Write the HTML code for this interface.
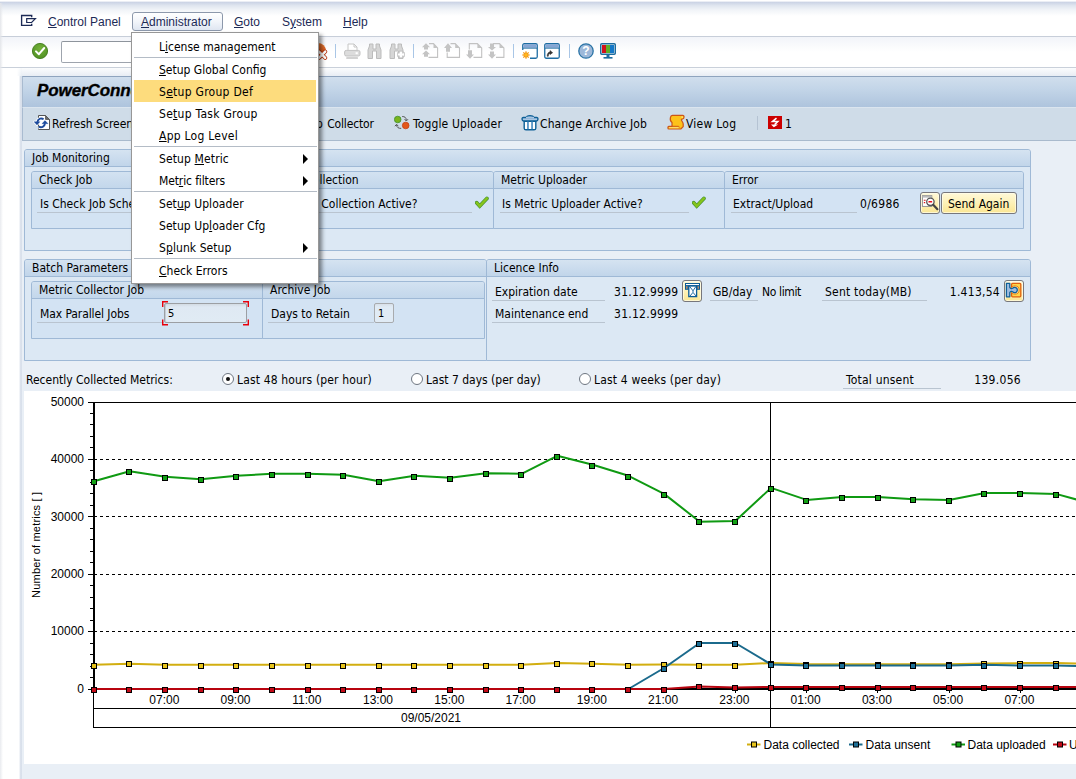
<!DOCTYPE html>
<html lang="en">
<head>
<meta charset="utf-8">
<title>PowerConnect Control Panel</title>
<style>
html,body{margin:0;padding:0;}
body{width:1076px;height:779px;overflow:hidden;position:relative;background:#e9eff6;
  font-family:"DejaVu Sans Condensed","Liberation Sans",sans-serif;font-size:12px;color:#000;}
.abs{position:absolute;}
.num{letter-spacing:0.27px;}
.t{position:absolute;white-space:nowrap;line-height:16px;height:16px;}
u{text-decoration:underline;text-underline-offset:1px;}
/* top chrome */
#menubar{left:0;top:0;width:1076px;height:36px;background:linear-gradient(#ffffff 0px,#ffffff 1.2px,#c9d2e4 2px,#dfe5ef 5.5px,#f1f4f8 10px,#ffffff 16px,#ffffff 36px);}
#menuline{left:0;top:36px;width:1076px;height:1px;background:#c7ced9;}
#toolbar{left:0;top:37px;width:1076px;height:30px;background:linear-gradient(#f2f4f9,#ffffff 50%,#ffffff);}
#toolline{left:0;top:67px;width:1076px;height:1px;background:#c9d0da;}
#gap{left:0;top:68px;width:1076px;height:8px;background:linear-gradient(#fbfcfd,#e8edf4);}
#leftstrip{left:0;top:68px;width:22px;height:711px;background:linear-gradient(90deg,#e9ebef 0px,#f4f5f7 1.5px,#ffffff 3px,#ffffff 19px,#e4e9f1 20px,#d3dbe8 21px,#dfe6ef 22px);}
#leftstrip2{left:0;top:68px;width:22px;height:8px;background:linear-gradient(90deg,#e9ebef 0px,#f4f5f7 1.5px,#ffffff 3px,#ffffff 17px,rgba(255,255,255,0) 22px);}
.menu{font-family:"Liberation Sans",sans-serif;font-size:12px;color:#1c2a56;top:14px;}
#adminbtn{left:132px;top:12px;width:89px;height:17px;border:1px solid #8c98ab;border-radius:3px;background:linear-gradient(#ffffff,#f2f5fa 50%,#dfe6f1);}
#cmd{left:61px;top:41px;width:200px;height:22px;border:1px solid #9ea4ad;border-top-color:#8e949c;border-radius:2px;background:#fff;box-sizing:border-box;}
.tsep{top:44px;width:1px;height:14px;background:#a9c6e6;}
/* title + app toolbar */
#title{left:22px;top:76px;width:1054px;height:31px;box-sizing:border-box;border-top:1px solid #8fa4be;border-left:1px solid #a9bbd0;background:linear-gradient(#d0deed,#c3d5e8 40%,#aec4dd);}
#titletxt{left:37px;top:80px;font-family:"Liberation Sans",sans-serif;font-weight:bold;font-style:italic;font-size:17px;line-height:22px;height:22px;color:#000;-webkit-text-stroke:0.35px #000;letter-spacing:-0.1px;}
#apptb{left:22px;top:107px;width:1054px;height:34px;box-sizing:border-box;border-left:1px solid #a9bbd0;border-bottom:1px solid #a9bacd;border-top:1px solid #dbe5ef;background:#cfdce8;}
/* groups */
.grp{position:absolute;box-sizing:border-box;border:1px solid #9fb9d6;border-radius:3px 3px 0 0;background:#dce8f4;}
.grp>.hd{position:absolute;left:0;top:0;right:0;height:16px;border-bottom:1px solid #9fb9d6;background:linear-gradient(#d5e3f1,#c1d5ea);border-radius:2px 2px 0 0;}
.sub{position:absolute;box-sizing:border-box;border:1px solid #9fb9d6;border-radius:3px 3px 0 0;background:#d3e3f3;}
.sub>.hd{position:absolute;left:0;top:0;right:0;height:16px;border-bottom:1px solid #9fb9d6;background:linear-gradient(#d3e2f1,#c3d7eb);border-radius:2px 2px 0 0;}
.lbl{position:absolute;white-space:nowrap;line-height:18px;height:18px;border-bottom:1px solid #b9c4d0;box-sizing:border-box;}
.btn{box-sizing:border-box;border:1px solid #77777c;border-radius:3px;background:linear-gradient(#fff9d9,#fdf0b3 55%,#fbe694);box-shadow:inset 0 0 0 1px rgba(255,253,235,0.7);}
.rad{width:12px;height:12px;box-sizing:border-box;border:1px solid #6e7681;border-radius:50%;background:#fff;}
.rad i{position:absolute;left:3px;top:3px;width:4px;height:4px;border-radius:50%;background:#111;}
/* dropdown */
#dd{left:131px;top:32px;width:186px;height:250px;background:#fff;border:1px solid #979797;box-sizing:content-box;box-shadow:3px 3px 4px rgba(0,0,0,0.45);}
#dd .it{position:absolute;left:27px;white-space:nowrap;line-height:16px;height:16px;color:#000;}
#dd .sep{position:absolute;left:2px;width:183px;height:1px;background:#b4bcc6;}
#dd .hl{position:absolute;left:2px;top:47px;width:182px;height:22px;background:#fddc7d;}
#dd .ar{position:absolute;left:171px;width:0;height:0;border-left:5px solid #000;border-top:5px solid transparent;border-bottom:5px solid transparent;}
</style>
</head>
<body>
<div class="abs" id="menubar"></div>
<div class="abs" id="menuline"></div>
<div class="abs" id="toolbar"></div>
<div class="abs" id="toolline"></div>
<div class="abs" id="gap"></div>
<div class="abs" id="leftstrip"></div>
<div class="abs" id="gap2" style="left:0;top:68px;width:22px;height:8px;background:linear-gradient(#f7f9fb,#e6ecf3)"></div>
<div class="abs" id="leftstrip2"></div>

<div class="abs" id="leftedge" style="left:0;top:3px;width:3px;height:65px;background:linear-gradient(90deg,#e4e6ea,rgba(255,255,255,0))"></div>
<!-- menu bar -->
<svg class="abs" style="left:20px;top:14px" width="18" height="13" viewBox="0 0 18 13"><path d="M11.7 3.2V1.5H1.6V11.3H11.7V9.8" fill="none" stroke="#1c2a56" stroke-width="1.35"/><path d="M6.7 4.7H15.4L11.6 8.5H6.7Z" fill="#fff" stroke="#1c2a56" stroke-width="1.2"/></svg>
<div class="t menu" style="left:48px"><u>C</u>ontrol Panel</div>
<div class="abs" id="adminbtn"></div>
<div class="t menu" style="left:141px"><u>A</u>dministrator</div>
<div class="t menu" style="left:234px"><u>G</u>oto</div>
<div class="t menu" style="left:282px">S<u>y</u>stem</div>
<div class="t menu" style="left:343px"><u>H</u>elp</div>

<!-- standard toolbar -->
<svg class="abs" style="left:31px;top:42px" width="18" height="18" viewBox="0 0 18 18"><defs><radialGradient id="gg" cx="0.5" cy="0.35" r="0.7"><stop offset="0" stop-color="#74b23a"/><stop offset="1" stop-color="#4f8f22"/></radialGradient></defs><circle cx="9" cy="9" r="7.6" fill="url(#gg)" stroke="#3f7a1a" stroke-width="0.9"/><path d="M5 9.4L7.9 12.2L13.2 6" fill="none" stroke="#fff" stroke-width="2" stroke-linecap="round" stroke-linejoin="round"/></svg>
<div class="abs" id="cmd"></div>
<div id="tbicons">
<!-- cancel (mostly hidden behind menu) -->
<svg class="abs" style="left:310px;top:42px" width="18" height="18" viewBox="0 0 18 18"><defs><linearGradient id="cg" x1="0" y1="0" x2="0" y2="1"><stop offset="0" stop-color="#ea7a32"/><stop offset="1" stop-color="#bf3a0c"/></linearGradient></defs><circle cx="8" cy="9" r="8" fill="url(#cg)"/><path d="M9 9.6L15.2 15.8M15.2 9.6L9 15.8" stroke="#b3300a" stroke-width="4" stroke-linecap="round"/><path d="M9 9.6L15.2 15.8M15.2 9.6L9 15.8" stroke="#fff" stroke-width="2.4" stroke-linecap="round"/></svg>
<div class="abs tsep" style="left:335px"></div>
<!-- print -->
<svg class="abs" style="left:344px;top:43px" width="17" height="17" viewBox="0 0 17 17"><path d="M4 7V1H10L13 4V7" fill="#fff" stroke="#c6c6c6" stroke-width="1"/><path d="M10 1V4H13" fill="none" stroke="#c6c6c6" stroke-width="1"/><rect x="0.6" y="7.4" width="15.4" height="5.6" rx="1.6" fill="#dcdcdc" stroke="#c2c2c2"/><rect x="11.6" y="9.2" width="2.2" height="2" fill="#fff"/><rect x="2.2" y="14.2" width="11.8" height="1.6" rx="0.6" fill="#c4c4c4"/></svg>
<!-- find -->
<svg class="abs" style="left:367px;top:43px" width="15" height="16" viewBox="0 0 15 16"><path d="M1 15.5V7L2.5 3V1H6V6H9V1H12.5V3L14 7V15.5H9.5V8H5.5V15.5Z" fill="#d6d6d6" stroke="#bcbcbc" stroke-width="1"/></svg>
<!-- find next -->
<svg class="abs" style="left:389px;top:43px" width="16" height="16" viewBox="0 0 16 16"><path d="M1 15.5V7L2.5 3V1H6V6H9V1H12.5V3L14 7V15.5H9.5V8H5.5V15.5Z" fill="#d6d6d6" stroke="#bcbcbc" stroke-width="1"/><path d="M9 11.5H15M12 8.5V14.5" stroke="#fff" stroke-width="2.2"/><path d="M8.5 9.5H10V8H14V9.5H15.5V13.5H14V15H10V13.5H8.5Z" fill="none" stroke="#c2c2c2" stroke-width="0.8"/></svg>
<div class="abs tsep" style="left:413px"></div>
<!-- page nav icons -->
<svg class="abs" style="left:420px;top:42px" width="86" height="18" viewBox="420 42 86 18">
<g fill="none" stroke="#c2c2c2" stroke-width="1.1">
<path d="M429 43.6H433.5L437.6 48V57.4H428.5"/>
<path d="M450.5 43.6H455.2L459.5 48V57.4H447.2V52.5"/>
<path d="M469.3 49.6V43.6H477.4L481.7 48V57.4H473.5"/>
<path d="M493 43.6H499.5L503.9 48V57.4H496"/>
</g>
<g fill="#c4c4c4">
<path d="M433.5 43.6L437.6 48H433.5Z"/><path d="M455.2 43.6L459.5 48H455.2Z"/><path d="M477.4 43.6L481.7 48H477.4Z"/><path d="M499.5 43.6L503.9 48H499.5Z"/>
<path d="M426 43.2L430 47.2H428V49.6H424V47.2H422Z"/><path d="M426 50.4L430 54.2H428V56.8H424V54.2H422Z"/>
<path d="M448 43.2L452 48H450V51.8H446V48H444Z"/>
<path d="M468 50.2H472V54.6H474L470 58.8L466 54.6H468Z"/>
<path d="M490 43.6H494V47H496L492 50.6L488 47H490Z"/><path d="M490 51.4H494V54.6H496L492 58.8L488 54.6H490Z"/>
</g></svg>
<div class="abs tsep" style="left:513px"></div>
<!-- new session -->
<svg class="abs" style="left:522px;top:43px" width="16" height="16" viewBox="0 0 16 16"><rect x="0.75" y="0.75" width="14.5" height="14.5" rx="1.5" fill="#fff" stroke="#1e6da3" stroke-width="1.3"/><rect x="1.4" y="1.4" width="13.2" height="3.4" fill="#86a6d4"/><path d="M1 5.2H15" stroke="#1e6da3" stroke-width="0.9"/><rect x="0" y="7" width="8" height="9" fill="#fff"/><g stroke="#f59a14" stroke-width="1.2"><path d="M4 8.2V15.8M0.2 12H7.8M1.3 9.3L6.7 14.7M6.7 9.3L1.3 14.7"/></g><circle cx="4" cy="12" r="2.2" fill="#ffb81e" stroke="#f08a10" stroke-width="0.6"/></svg>
<!-- shortcut -->
<svg class="abs" style="left:544px;top:43px" width="16" height="16" viewBox="0 0 16 16"><rect x="0.75" y="0.75" width="14.5" height="14.5" rx="1.5" fill="#fff" stroke="#1e6da3" stroke-width="1.3"/><rect x="1.4" y="1.4" width="13.2" height="3.4" fill="#86a6d4"/><path d="M1 5.2H15" stroke="#1e6da3" stroke-width="0.9"/><path d="M3.2 13.2C3.2 10.6 4.2 9.3 6 9.1V7.6L8.6 9.7L6 11.6V10.4C4.9 10.5 4.3 11.4 4.3 13.2Z" fill="#333" stroke="#333" stroke-width="0.6"/></svg>
<div class="abs tsep" style="left:569px"></div>
<!-- help -->
<svg class="abs" style="left:578px;top:43px" width="16" height="16" viewBox="0 0 16 16"><circle cx="8" cy="8" r="7.2" fill="#9db8d9" stroke="#2b74a6" stroke-width="1.3"/><text x="8" y="12.2" text-anchor="middle" font-family="Liberation Sans, sans-serif" font-weight="bold" font-size="12" fill="#fff">?</text></svg>
<!-- layout -->
<svg class="abs" style="left:600px;top:43px" width="16" height="16" viewBox="0 0 16 16"><rect x="0.75" y="0.75" width="14.5" height="10.5" rx="1" fill="#fff" stroke="#1c6c9e" stroke-width="1.5"/><rect x="2" y="2" width="4" height="8" fill="#d1121b"/><rect x="6" y="2" width="4" height="8" fill="#5fae27"/><rect x="10" y="2" width="4" height="8" fill="#1478c8"/><rect x="6.5" y="11.5" width="3" height="2.5" fill="#1c6c9e"/><rect x="3.5" y="14" width="9" height="1.6" fill="#1c6c9e"/></svg>
</div>

<!-- title + application toolbar -->
<div class="abs" id="title"></div>
<div class="abs" id="titletxt">PowerConnect Control Panel</div>
<div class="abs" id="apptb"></div>
<div id="appitems">
<!-- refresh -->
<svg class="abs" style="left:33px;top:114px" width="18" height="17" viewBox="0 0 18 17"><path d="M5.5 1.5H12.5L16.5 5.5V15.5H5.5Z" fill="#fff" stroke="#555" stroke-width="1"/><path d="M12.5 1.5V5.5H16.5Z" fill="#6a6a6a" stroke="#555" stroke-width="0.8"/><path d="M10.6 5.2C8.6 3.8 5.2 4.2 4.3 8" fill="none" stroke="#fff" stroke-width="3.6"/><path d="M1 7.7H7L4 11Z" fill="#fff" stroke="#fff" stroke-width="1.8" stroke-linejoin="round"/><path d="M12 9.4C11.7 12.8 8.4 14 5.6 12.6" fill="none" stroke="#fff" stroke-width="3.6"/><path d="M8.9 9.7H15.1L12 6.6Z" fill="#fff" stroke="#fff" stroke-width="1.8" stroke-linejoin="round"/><path d="M10.6 5.2C8.6 3.8 5.2 4.2 4.3 8" fill="none" stroke="#1c4a9c" stroke-width="1.9"/><path d="M1 7.7H7L4 11Z" fill="#1c4a9c" stroke="#1c4a9c" stroke-width="0.3" stroke-linejoin="round"/><path d="M12 9.4C11.7 12.8 8.4 14 5.6 12.6" fill="none" stroke="#1c4a9c" stroke-width="1.9"/><path d="M8.9 9.7H15.1L12 6.6Z" fill="#1c4a9c" stroke="#1c4a9c" stroke-width="0.3" stroke-linejoin="round"/></svg>
<div class="t" style="left:52px;top:116px">Refresh Screen</div>
<svg class="abs" style="left:147px;top:115px" width="16" height="16" viewBox="0 0 16 16"><circle cx="3.7" cy="4.5" r="3.3" fill="#7ab51d" stroke="#3f8f2d" stroke-width="0.8"/><circle cx="11.7" cy="10.5" r="3.3" fill="#e2571b" stroke="#c83f10" stroke-width="0.8"/><path d="M8.2 1.5C10.6 1.5 12.3 2.4 12.3 5.4M10.6 4.2L12.3 6L14 4.2" fill="none" stroke="#555" stroke-width="1"/><path d="M7.2 13.4C4.6 13.4 2.6 12.6 2.6 9.8M0.9 11.2L2.6 9.3L4.3 11.2" fill="none" stroke="#555" stroke-width="1"/></svg>
<div class="t" style="left:166px;top:116px">Toggle Check Job</div>
<svg class="abs" style="left:277px;top:115px" width="16" height="16" viewBox="0 0 16 16"><circle cx="3.7" cy="4.5" r="3.3" fill="#7ab51d" stroke="#3f8f2d" stroke-width="0.8"/><circle cx="11.7" cy="10.5" r="3.3" fill="#e2571b" stroke="#c83f10" stroke-width="0.8"/><path d="M8.2 1.5C10.6 1.5 12.3 2.4 12.3 5.4M10.6 4.2L12.3 6L14 4.2" fill="none" stroke="#555" stroke-width="1"/><path d="M7.2 13.4C4.6 13.4 2.6 12.6 2.6 9.8M0.9 11.2L2.6 9.3L4.3 11.2" fill="none" stroke="#555" stroke-width="1"/></svg>
<div class="t" id="stopc" style="left:300.1px;top:116px;letter-spacing:-0.17px"><span style="margin-left:-1.4px;margin-right:1.4px">Stop</span> Collector</div>
<svg class="abs" style="left:394px;top:115px" width="16" height="16" viewBox="0 0 16 16"><circle cx="3.7" cy="4.5" r="3.3" fill="#7ab51d" stroke="#3f8f2d" stroke-width="0.8"/><circle cx="11.7" cy="10.5" r="3.3" fill="#e2571b" stroke="#c83f10" stroke-width="0.8"/><path d="M8.2 1.5C10.6 1.5 12.3 2.4 12.3 5.4M10.6 4.2L12.3 6L14 4.2" fill="none" stroke="#555" stroke-width="1"/><path d="M7.2 13.4C4.6 13.4 2.6 12.6 2.6 9.8M0.9 11.2L2.6 9.3L4.3 11.2" fill="none" stroke="#555" stroke-width="1"/></svg>
<div class="t" style="left:413px;top:116px;letter-spacing:0.14px">Toggle Uploader</div>
<!-- trash -->
<svg class="abs" style="left:521px;top:114px" width="18" height="17" viewBox="0 0 18 17"><path d="M5.4 3.6C5.4 1 12.7 1 12.7 3.6" fill="#a9c6e4" stroke="#0d5f96" stroke-width="1.3"/><path d="M2.4 3.5H15.6C17.5 3.5 17.5 6.6 15.2 7.2H2.8C0.5 6.6 0.5 3.5 2.4 3.5Z" fill="#a9c6e4" stroke="#0d5f96" stroke-width="1.3"/><path d="M5 3.6H13" stroke="#a9c6e4" stroke-width="1.6"/><path d="M3.2 7.2V14.2C3.2 15.3 4 15.8 5 15.8H13C14 15.8 14.8 15.3 14.8 14.2V7.2Z" fill="#fff" stroke="#0d5f96" stroke-width="1.4"/><rect x="6.1" y="7.6" width="1.7" height="7.6" fill="#4f8fc2"/><rect x="10.2" y="7.6" width="1.7" height="7.6" fill="#4f8fc2"/></svg>
<div class="t" style="left:540px;top:116px;letter-spacing:0.1px">Change Archive Job</div>
<!-- scroll -->
<svg class="abs" style="left:667px;top:114px" width="18" height="16" viewBox="0 0 18 16"><path d="M5.4 1.3H15.8C17.5 1.3 17.5 4.6 15.6 5L14.4 5.4C14.2 7 16.2 8 16.2 10V12.6L13.8 15H1.8C0.6 15 0.6 12.3 1.8 12.3H5V8.6C3.4 7.4 3 5.6 3.4 3.6C3.6 2.2 4.4 1.3 5.4 1.3Z" fill="#fdc21a" stroke="#cc5518" stroke-width="1.2" stroke-linejoin="round"/><path d="M5 12.3H11.6L12.6 13.4" fill="none" stroke="#cc5518" stroke-width="1"/><path d="M2.2 13.7H11.4" stroke="#ffe27a" stroke-width="1"/><circle cx="15.2" cy="3.1" r="0.9" fill="#ffe27a"/></svg>
<div class="t" style="left:686px;top:116px;letter-spacing:0.25px">View Log</div>
<div class="abs" style="left:757px;top:116px;width:1px;height:14px;background:#b5c3d3"></div>
<!-- error -->
<svg class="abs" style="left:768px;top:116px" width="14" height="13" viewBox="0 0 14 13"><rect width="14" height="13" fill="#cc0000"/><path d="M8.5 2.2L4.4 5.6H9.8L6.6 8.6" fill="none" stroke="#fff" stroke-width="1.5" stroke-linejoin="miter"/><path d="M3 8.6H10.2L5.8 11.3Z" fill="#fff"/></svg>
<div class="t" style="left:785px;top:116px">1</div>
</div>

<div id="groups">
<!-- Job Monitoring -->
<div class="grp" style="left:24px;top:149px;width:1007px;height:102px"><div class="hd"></div></div>
<div class="t" style="left:32px;top:150px">Job Monitoring</div>
<div class="sub" style="left:31px;top:171px;width:232px;height:58px"><div class="hd"></div></div>
<div class="sub" style="left:262px;top:171px;width:232px;height:58px"><div class="hd"></div></div>
<div class="sub" style="left:493px;top:171px;width:232px;height:58px"><div class="hd"></div></div>
<div class="sub" style="left:724px;top:171px;width:300px;height:58px"><div class="hd"></div></div>
<div class="t" style="left:39px;top:172px">Check Job</div>
<div class="t" style="left:268.3px;top:172px">Metric Collection</div>
<div class="t" style="left:501px;top:172px">Metric Uploader</div>
<div class="t" style="left:732px;top:172px">Error</div>
<div class="lbl" style="left:37px;top:195px;width:204px;padding-left:3px">Is Check Job Scheduled?</div>
<div class="lbl" style="left:268px;top:195px;width:204px;padding-left:3.8px;letter-spacing:0.02px">Is Metric Collection Active?</div>
<svg class="abs" style="left:475px;top:196px" width="15" height="13" viewBox="0 0 15 13"><path d="M1.7 6.7L4.7 10.1L11.9 2.4" fill="none" stroke="#3d8c2e" stroke-width="3.7" stroke-linecap="round" stroke-linejoin="miter"/><path d="M1.7 6.7L4.7 10.1L11.9 2.4" fill="none" stroke="#86c41c" stroke-width="2.5" stroke-linecap="round" stroke-linejoin="miter"/></svg>
<div class="lbl" style="left:500px;top:195px;width:189px;padding-left:2px">Is Metric Uploader Active?</div>
<svg class="abs" style="left:692px;top:196px" width="15" height="13" viewBox="0 0 15 13"><path d="M1.7 6.7L4.7 10.1L11.9 2.4" fill="none" stroke="#3d8c2e" stroke-width="3.7" stroke-linecap="round" stroke-linejoin="miter"/><path d="M1.7 6.7L4.7 10.1L11.9 2.4" fill="none" stroke="#86c41c" stroke-width="2.5" stroke-linecap="round" stroke-linejoin="miter"/></svg>
<div class="lbl" style="left:731px;top:195px;width:126px;padding-left:2px">Extract/Upload</div>
<div class="t" style="left:860px;top:196px;letter-spacing:0.3px">0/6986</div>
<div class="abs btn" style="left:920px;top:192px;width:20px;height:22px"></div>
<svg class="abs" style="left:921px;top:194px" width="18" height="17" viewBox="0 0 18 17"><rect x="1.4" y="1.6" width="9.4" height="10.8" fill="#fff" stroke="#8a8a8a" stroke-width="0.9"/><rect x="1.4" y="1.6" width="9.4" height="2" fill="#b9b9b9"/><path d="M2.8 6.2H4.6M2.8 8.6H4.2" stroke="#e01818" stroke-width="1.1"/><circle cx="9.4" cy="7.8" r="3.7" fill="#fff" stroke="#555" stroke-width="1.3"/><rect x="7.4" y="6.9" width="3.8" height="1.7" rx="0.5" fill="#e8101a"/><path d="M12.2 10.8L16.4 15.2" stroke="#444" stroke-width="2.2" stroke-linecap="round"/></svg>
<div class="abs btn" style="left:941px;top:192px;width:76px;height:22px"></div>
<div class="t" style="left:948px;top:196px">Send Again</div>

<!-- Batch Parameters -->
<div class="grp" style="left:24px;top:259px;width:463px;height:102px"><div class="hd"></div></div>
<div class="t" style="left:32px;top:260px">Batch Parameters</div>
<div class="sub" style="left:31px;top:281px;width:232px;height:58px"><div class="hd"></div></div>
<div class="sub" style="left:262px;top:281px;width:223px;height:58px"><div class="hd"></div></div>
<div class="t" style="left:39px;top:282px">Metric Collector Job</div>
<div class="t" style="left:270px;top:282px">Archive Job</div>
<div class="lbl" style="left:37px;top:305px;width:127px;padding-left:3px;letter-spacing:-0.09px">Max Parallel Jobs</div>
<div class="abs" style="left:164px;top:303px;width:83px;height:20px;box-sizing:border-box;border:1px solid #9c9fa3;border-radius:2px;background:linear-gradient(#d3dbe3,#dfe9f3 3px,#e0ebf4);box-shadow:inset 1px 0 0 rgba(170,176,184,0.5)"></div>
<div class="t" style="left:168px;top:306px;font-size:11px">5</div>
<svg class="abs" style="left:162px;top:301px" width="88" height="25" viewBox="0 0 88 25"><path d="M6 0.7H0.7V6M81 0.7H86.3V6M0.7 18.5V23.7H6M86.3 18.5V23.7H81" fill="none" stroke="#e8000a" stroke-width="1.4"/></svg>
<div class="lbl" style="left:268px;top:305px;width:106px;padding-left:3px">Days to Retain</div>
<div class="abs" style="left:374px;top:303px;width:20px;height:20px;box-sizing:border-box;border:1px solid #a8abae;border-radius:2px;background:linear-gradient(#d8e0e8,#e0ebf5 3px,#e0ebf5)"></div>
<div class="t" style="left:378px;top:306px;font-size:11px">1</div>

<!-- Licence Info -->
<div class="grp" style="left:486px;top:259px;width:545px;height:102px"><div class="hd"></div></div>
<div class="t" style="left:494px;top:260px">Licence Info</div>
<div class="lbl" style="left:492px;top:283px;width:113px;padding-left:3px">Expiration date</div>
<div class="t num" style="left:614px;top:284px">31.12.9999</div>
<div class="abs btn" style="left:682px;top:280px;width:20px;height:22px"></div>
<svg class="abs" style="left:684px;top:282px" width="17" height="17" viewBox="0 0 17 17"><rect x="1" y="1" width="15" height="6.8" fill="#0b5c96"/><rect x="2" y="2" width="13" height="1.1" fill="#fff"/><rect x="2" y="4.2" width="1.6" height="2.6" fill="#b08a70"/><rect x="13.4" y="4.2" width="1.6" height="2.6" fill="#b08a70"/><rect x="4.8" y="4" width="7.8" height="10.6" fill="#fff" stroke="#0b5c96" stroke-width="1.3"/><path d="M5.6 4.4L9 8.8M12 4.4L9 8.8V10.4L6 14M9.2 10.6L12 14" fill="none" stroke="#0b5c96" stroke-width="0.9"/></svg>
<div class="lbl" style="left:710px;top:283px;width:48px;padding-left:3px">GB/day</div>
<div class="t" style="left:762px;top:284px;letter-spacing:-0.37px">No limit</div>
<div class="lbl" style="left:822px;top:283px;width:105px;padding-left:3px;letter-spacing:0.21px">Sent today(MB)</div>
<div class="t" style="left:900px;top:284px;width:100px;text-align:right;letter-spacing:0.27px">1.413,54</div>
<div class="abs btn" style="left:1004px;top:280px;width:20px;height:22px"></div>
<svg class="abs" style="left:1005px;top:282px" width="17" height="17" viewBox="0 0 17 17"><rect x="6.6" y="1.3" width="9.2" height="13.5" rx="1" fill="#ffd54a" stroke="#e0600e" stroke-width="1.3"/><circle cx="10" cy="8" r="4.1" fill="#ffe9a0" stroke="#e8801a" stroke-width="1"/><path d="M1.4 1.3H4.8V5.4C5.6 6.6 6.6 6.9 7.6 6.2A2.7 2.7 0 1 1 7.6 9.8C6.6 9.1 5.6 9.4 4.8 10.6V14.8H1.4Z" fill="#9dbce0" stroke="#0f5f99" stroke-width="1.3" stroke-linejoin="round"/></svg>
<div class="lbl" style="left:492px;top:305px;width:113px;padding-left:3px">Maintenance end</div>
<div class="t num" style="left:614px;top:306px">31.12.9999</div>
</div>
<div id="radiorow">
<div class="t" style="left:26px;top:372px">Recently Collected Metrics:</div>
<div class="abs rad" style="left:222px;top:373px"><i></i></div>
<div class="t" style="left:237px;top:372px;letter-spacing:0.15px">Last 48 hours (per hour)</div>
<div class="abs rad" style="left:411px;top:373px"></div>
<div class="t" style="left:426px;top:372px">Last 7 days (per day)</div>
<div class="abs rad" style="left:579px;top:373px"></div>
<div class="t" style="left:594px;top:372px;letter-spacing:0.17px">Last 4 weeks (per day)</div>
<div class="lbl" style="left:843px;top:371px;width:98px;padding-left:3px;letter-spacing:0.2px">Total unsent</div>
<div class="t" style="left:921px;top:372px;width:100px;text-align:right;letter-spacing:0.3px">139.056</div>
</div>
<div id="chart"><svg class="abs" style="left:22px;top:391px" width="1054" height="373" viewBox="22 391 1054 373" font-family="Liberation Sans, sans-serif" font-size="12"><rect x="24" y="391" width="1052" height="373" fill="#fff"/><path d="M94 459.5H1076" stroke="#000" stroke-width="1" stroke-dasharray="3 3" shape-rendering="crispEdges"/><path d="M94 516.5H1076" stroke="#000" stroke-width="1" stroke-dasharray="3 3" shape-rendering="crispEdges"/><path d="M94 574.5H1076" stroke="#000" stroke-width="1" stroke-dasharray="3 3" shape-rendering="crispEdges"/><path d="M94 631.5H1076" stroke="#000" stroke-width="1" stroke-dasharray="3 3" shape-rendering="crispEdges"/><path d="M93 402.5H1076" stroke="#000" stroke-width="1" shape-rendering="crispEdges"/><path d="M94 402V690" stroke="#000" stroke-width="2" shape-rendering="crispEdges"/><path d="M88 689.5H93M90 689.0H93 M90 677.5H93 M90 666.5H93 M90 654.5H93 M90 643.5H93 M88 631.5H93M90 631.0H93 M90 620.5H93 M90 608.5H93 M90 597.5H93 M90 585.5H93 M88 574.5H93M90 574.0H93 M90 562.5H93 M90 551.5H93 M90 539.5H93 M90 528.5H93 M88 516.5H93M90 516.0H93 M90 505.5H93 M90 493.5H93 M90 482.5H93 M90 470.5H93 M88 459.5H93M90 459.0H93 M90 447.5H93 M90 436.5H93 M90 424.5H93 M90 413.5H93 M88 402.5H93M90 402.0H93" stroke="#000" stroke-width="1" shape-rendering="crispEdges"/><text x="84" y="692.7" text-anchor="end">0</text><text x="84" y="635.3" text-anchor="end">10000</text><text x="84" y="577.9" text-anchor="end">20000</text><text x="84" y="520.5" text-anchor="end">30000</text><text x="84" y="463.1" text-anchor="end">40000</text><text x="84" y="405.7" text-anchor="end">50000</text><text transform="translate(39.7,544.8) rotate(-90)" text-anchor="middle" font-size="11" letter-spacing="0.2">Number of metrics [ ]</text><path d="M93 689H1076" stroke="#000" stroke-width="2" shape-rendering="crispEdges"/><text x="164.3" y="704" text-anchor="middle">07:00</text><text x="235.5" y="704" text-anchor="middle">09:00</text><text x="306.8" y="704" text-anchor="middle">11:00</text><text x="378.0" y="704" text-anchor="middle">13:00</text><text x="449.3" y="704" text-anchor="middle">15:00</text><text x="520.6" y="704" text-anchor="middle">17:00</text><text x="591.8" y="704" text-anchor="middle">19:00</text><text x="663.1" y="704" text-anchor="middle">21:00</text><text x="734.3" y="704" text-anchor="middle">23:00</text><text x="805.6" y="704" text-anchor="middle">01:00</text><text x="876.9" y="704" text-anchor="middle">03:00</text><text x="948.1" y="704" text-anchor="middle">05:00</text><text x="1019.4" y="704" text-anchor="middle">07:00</text><path d="M165.5 690V693 M236.5 690V693 M307.5 690V693 M379.5 690V693 M450.5 690V693 M521.5 690V693 M592.5 690V693 M664.5 690V693 M735.5 690V693 M806.5 690V693 M877.5 690V693 M949.5 690V693 M1020.5 690V693" stroke="#000" stroke-width="1" shape-rendering="crispEdges"/><path d="M93.5 689V727.5H1076M93.5 708.5H1076" fill="none" stroke="#000" stroke-width="1" shape-rendering="crispEdges"/><path d="M770.5 402V727.5" stroke="#000" stroke-width="1" shape-rendering="crispEdges"/><text x="431" y="722" text-anchor="middle">09/05/2021</text><polyline points="94.0,481.2 129.6,471.2 165.3,476.8 200.9,479.2 236.5,475.8 272.1,473.8 307.8,473.8 343.4,474.8 379.0,481.2 414.7,475.8 450.3,477.8 485.9,473.2 521.6,473.8 557.2,455.8 592.8,464.8 628.5,475.8 664.1,493.9 699.7,521.7 735.3,521.0 771.0,487.9 806.6,499.9 842.2,496.9 877.9,496.9 913.5,499.2 949.1,499.9 984.8,492.9 1020.4,492.9 1056.0,493.9 1091.6,503.7" fill="none" stroke="#0f9a12" stroke-width="2" stroke-linejoin="round"/><rect x="91.5" y="479.5" width="5" height="5" fill="#12a114" stroke="#000" stroke-width="1"/><rect x="126.5" y="469.5" width="5" height="5" fill="#12a114" stroke="#000" stroke-width="1"/><rect x="162.5" y="475.5" width="5" height="5" fill="#12a114" stroke="#000" stroke-width="1"/><rect x="198.5" y="477.5" width="5" height="5" fill="#12a114" stroke="#000" stroke-width="1"/><rect x="233.5" y="474.5" width="5" height="5" fill="#12a114" stroke="#000" stroke-width="1"/><rect x="269.5" y="472.5" width="5" height="5" fill="#12a114" stroke="#000" stroke-width="1"/><rect x="305.5" y="472.5" width="5" height="5" fill="#12a114" stroke="#000" stroke-width="1"/><rect x="340.5" y="473.5" width="5" height="5" fill="#12a114" stroke="#000" stroke-width="1"/><rect x="376.5" y="479.5" width="5" height="5" fill="#12a114" stroke="#000" stroke-width="1"/><rect x="411.5" y="474.5" width="5" height="5" fill="#12a114" stroke="#000" stroke-width="1"/><rect x="447.5" y="476.5" width="5" height="5" fill="#12a114" stroke="#000" stroke-width="1"/><rect x="483.5" y="471.5" width="5" height="5" fill="#12a114" stroke="#000" stroke-width="1"/><rect x="518.5" y="472.5" width="5" height="5" fill="#12a114" stroke="#000" stroke-width="1"/><rect x="554.5" y="454.5" width="5" height="5" fill="#12a114" stroke="#000" stroke-width="1"/><rect x="589.5" y="463.5" width="5" height="5" fill="#12a114" stroke="#000" stroke-width="1"/><rect x="625.5" y="474.5" width="5" height="5" fill="#12a114" stroke="#000" stroke-width="1"/><rect x="661.5" y="492.5" width="5" height="5" fill="#12a114" stroke="#000" stroke-width="1"/><rect x="696.5" y="519.5" width="5" height="5" fill="#12a114" stroke="#000" stroke-width="1"/><rect x="732.5" y="519.5" width="5" height="5" fill="#12a114" stroke="#000" stroke-width="1"/><rect x="768.5" y="486.5" width="5" height="5" fill="#12a114" stroke="#000" stroke-width="1"/><rect x="803.5" y="498.5" width="5" height="5" fill="#12a114" stroke="#000" stroke-width="1"/><rect x="839.5" y="495.5" width="5" height="5" fill="#12a114" stroke="#000" stroke-width="1"/><rect x="875.5" y="495.5" width="5" height="5" fill="#12a114" stroke="#000" stroke-width="1"/><rect x="910.5" y="497.5" width="5" height="5" fill="#12a114" stroke="#000" stroke-width="1"/><rect x="946.5" y="498.5" width="5" height="5" fill="#12a114" stroke="#000" stroke-width="1"/><rect x="981.5" y="491.5" width="5" height="5" fill="#12a114" stroke="#000" stroke-width="1"/><rect x="1017.5" y="491.5" width="5" height="5" fill="#12a114" stroke="#000" stroke-width="1"/><rect x="1053.5" y="492.5" width="5" height="5" fill="#12a114" stroke="#000" stroke-width="1"/><rect x="1088.5" y="501.5" width="5" height="5" fill="#12a114" stroke="#000" stroke-width="1"/><polyline points="94.0,664.7 129.6,663.7 165.3,664.7 200.9,664.7 236.5,664.7 272.1,664.7 307.8,664.7 343.4,664.7 379.0,664.7 414.7,664.7 450.3,664.7 485.9,664.7 521.6,664.7 557.2,663.0 592.8,663.7 628.5,664.7 664.1,664.4 699.7,664.7 735.3,664.7 771.0,663.0 806.6,664.0 842.2,664.2 877.9,664.2 913.5,664.2 949.1,664.2 984.8,663.6 1020.4,663.1 1056.0,663.1 1091.6,663.8" fill="none" stroke="#d2ae10" stroke-width="2" stroke-linejoin="round"/><rect x="91.5" y="663.5" width="5" height="5" fill="#e7c41c" stroke="#000" stroke-width="1"/><rect x="126.5" y="661.5" width="5" height="5" fill="#e7c41c" stroke="#000" stroke-width="1"/><rect x="162.5" y="663.5" width="5" height="5" fill="#e7c41c" stroke="#000" stroke-width="1"/><rect x="198.5" y="663.5" width="5" height="5" fill="#e7c41c" stroke="#000" stroke-width="1"/><rect x="233.5" y="663.5" width="5" height="5" fill="#e7c41c" stroke="#000" stroke-width="1"/><rect x="269.5" y="663.5" width="5" height="5" fill="#e7c41c" stroke="#000" stroke-width="1"/><rect x="305.5" y="663.5" width="5" height="5" fill="#e7c41c" stroke="#000" stroke-width="1"/><rect x="340.5" y="663.5" width="5" height="5" fill="#e7c41c" stroke="#000" stroke-width="1"/><rect x="376.5" y="663.5" width="5" height="5" fill="#e7c41c" stroke="#000" stroke-width="1"/><rect x="411.5" y="663.5" width="5" height="5" fill="#e7c41c" stroke="#000" stroke-width="1"/><rect x="447.5" y="663.5" width="5" height="5" fill="#e7c41c" stroke="#000" stroke-width="1"/><rect x="483.5" y="663.5" width="5" height="5" fill="#e7c41c" stroke="#000" stroke-width="1"/><rect x="518.5" y="663.5" width="5" height="5" fill="#e7c41c" stroke="#000" stroke-width="1"/><rect x="554.5" y="661.5" width="5" height="5" fill="#e7c41c" stroke="#000" stroke-width="1"/><rect x="589.5" y="661.5" width="5" height="5" fill="#e7c41c" stroke="#000" stroke-width="1"/><rect x="625.5" y="663.5" width="5" height="5" fill="#e7c41c" stroke="#000" stroke-width="1"/><rect x="661.5" y="662.5" width="5" height="5" fill="#e7c41c" stroke="#000" stroke-width="1"/><rect x="696.5" y="663.5" width="5" height="5" fill="#e7c41c" stroke="#000" stroke-width="1"/><rect x="732.5" y="663.5" width="5" height="5" fill="#e7c41c" stroke="#000" stroke-width="1"/><rect x="768.5" y="661.5" width="5" height="5" fill="#e7c41c" stroke="#000" stroke-width="1"/><rect x="803.5" y="662.5" width="5" height="5" fill="#e7c41c" stroke="#000" stroke-width="1"/><rect x="839.5" y="662.5" width="5" height="5" fill="#e7c41c" stroke="#000" stroke-width="1"/><rect x="875.5" y="662.5" width="5" height="5" fill="#e7c41c" stroke="#000" stroke-width="1"/><rect x="910.5" y="662.5" width="5" height="5" fill="#e7c41c" stroke="#000" stroke-width="1"/><rect x="946.5" y="662.5" width="5" height="5" fill="#e7c41c" stroke="#000" stroke-width="1"/><rect x="981.5" y="661.5" width="5" height="5" fill="#e7c41c" stroke="#000" stroke-width="1"/><rect x="1017.5" y="661.5" width="5" height="5" fill="#e7c41c" stroke="#000" stroke-width="1"/><rect x="1053.5" y="661.5" width="5" height="5" fill="#e7c41c" stroke="#000" stroke-width="1"/><rect x="1088.5" y="662.5" width="5" height="5" fill="#e7c41c" stroke="#000" stroke-width="1"/><polyline points="94.0,689.0 129.6,689.0 165.3,689.0 200.9,689.0 236.5,689.0 272.1,689.0 307.8,689.0 343.4,689.0 379.0,689.0 414.7,689.0 450.3,689.0 485.9,689.0 521.6,689.0 557.2,689.0 592.8,689.0 628.5,689.0 664.1,668.0 699.7,643.0 735.3,643.0 771.0,664.4 806.6,665.6 842.2,665.6 877.9,665.6 913.5,665.6 949.1,665.6 984.8,664.8 1020.4,665.6 1056.0,665.6 1091.6,666.4" fill="none" stroke="#1b6a8c" stroke-width="2" stroke-linejoin="round"/><rect x="91.5" y="687.5" width="5" height="5" fill="#1d6f96" stroke="#000" stroke-width="1"/><rect x="126.5" y="687.5" width="5" height="5" fill="#1d6f96" stroke="#000" stroke-width="1"/><rect x="162.5" y="687.5" width="5" height="5" fill="#1d6f96" stroke="#000" stroke-width="1"/><rect x="198.5" y="687.5" width="5" height="5" fill="#1d6f96" stroke="#000" stroke-width="1"/><rect x="233.5" y="687.5" width="5" height="5" fill="#1d6f96" stroke="#000" stroke-width="1"/><rect x="269.5" y="687.5" width="5" height="5" fill="#1d6f96" stroke="#000" stroke-width="1"/><rect x="305.5" y="687.5" width="5" height="5" fill="#1d6f96" stroke="#000" stroke-width="1"/><rect x="340.5" y="687.5" width="5" height="5" fill="#1d6f96" stroke="#000" stroke-width="1"/><rect x="376.5" y="687.5" width="5" height="5" fill="#1d6f96" stroke="#000" stroke-width="1"/><rect x="411.5" y="687.5" width="5" height="5" fill="#1d6f96" stroke="#000" stroke-width="1"/><rect x="447.5" y="687.5" width="5" height="5" fill="#1d6f96" stroke="#000" stroke-width="1"/><rect x="483.5" y="687.5" width="5" height="5" fill="#1d6f96" stroke="#000" stroke-width="1"/><rect x="518.5" y="687.5" width="5" height="5" fill="#1d6f96" stroke="#000" stroke-width="1"/><rect x="554.5" y="687.5" width="5" height="5" fill="#1d6f96" stroke="#000" stroke-width="1"/><rect x="589.5" y="687.5" width="5" height="5" fill="#1d6f96" stroke="#000" stroke-width="1"/><rect x="625.5" y="687.5" width="5" height="5" fill="#1d6f96" stroke="#000" stroke-width="1"/><rect x="661.5" y="666.5" width="5" height="5" fill="#1d6f96" stroke="#000" stroke-width="1"/><rect x="696.5" y="641.5" width="5" height="5" fill="#1d6f96" stroke="#000" stroke-width="1"/><rect x="732.5" y="641.5" width="5" height="5" fill="#1d6f96" stroke="#000" stroke-width="1"/><rect x="768.5" y="662.5" width="5" height="5" fill="#1d6f96" stroke="#000" stroke-width="1"/><rect x="803.5" y="663.5" width="5" height="5" fill="#1d6f96" stroke="#000" stroke-width="1"/><rect x="839.5" y="663.5" width="5" height="5" fill="#1d6f96" stroke="#000" stroke-width="1"/><rect x="875.5" y="663.5" width="5" height="5" fill="#1d6f96" stroke="#000" stroke-width="1"/><rect x="910.5" y="663.5" width="5" height="5" fill="#1d6f96" stroke="#000" stroke-width="1"/><rect x="946.5" y="663.5" width="5" height="5" fill="#1d6f96" stroke="#000" stroke-width="1"/><rect x="981.5" y="663.5" width="5" height="5" fill="#1d6f96" stroke="#000" stroke-width="1"/><rect x="1017.5" y="663.5" width="5" height="5" fill="#1d6f96" stroke="#000" stroke-width="1"/><rect x="1053.5" y="663.5" width="5" height="5" fill="#1d6f96" stroke="#000" stroke-width="1"/><rect x="1088.5" y="664.5" width="5" height="5" fill="#1d6f96" stroke="#000" stroke-width="1"/><polyline points="94.0,689.0 129.6,689.0 165.3,689.0 200.9,689.0 236.5,689.0 272.1,689.0 307.8,689.0 343.4,689.0 379.0,689.0 414.7,689.0 450.3,689.0 485.9,689.0 521.6,689.0 557.2,689.0 592.8,689.0 628.5,689.0 664.1,689.0 699.7,686.6 735.3,687.4 771.0,687.0 806.6,687.0 842.2,687.0 877.9,687.0 913.5,687.0 949.1,687.0 984.8,687.0 1020.4,687.0 1056.0,687.0 1091.6,687.0" fill="none" stroke="#b8040f" stroke-width="2" stroke-linejoin="round"/><rect x="91.5" y="687.5" width="5" height="5" fill="#c40a18" stroke="#000" stroke-width="1"/><rect x="126.5" y="687.5" width="5" height="5" fill="#c40a18" stroke="#000" stroke-width="1"/><rect x="162.5" y="687.5" width="5" height="5" fill="#c40a18" stroke="#000" stroke-width="1"/><rect x="198.5" y="687.5" width="5" height="5" fill="#c40a18" stroke="#000" stroke-width="1"/><rect x="233.5" y="687.5" width="5" height="5" fill="#c40a18" stroke="#000" stroke-width="1"/><rect x="269.5" y="687.5" width="5" height="5" fill="#c40a18" stroke="#000" stroke-width="1"/><rect x="305.5" y="687.5" width="5" height="5" fill="#c40a18" stroke="#000" stroke-width="1"/><rect x="340.5" y="687.5" width="5" height="5" fill="#c40a18" stroke="#000" stroke-width="1"/><rect x="376.5" y="687.5" width="5" height="5" fill="#c40a18" stroke="#000" stroke-width="1"/><rect x="411.5" y="687.5" width="5" height="5" fill="#c40a18" stroke="#000" stroke-width="1"/><rect x="447.5" y="687.5" width="5" height="5" fill="#c40a18" stroke="#000" stroke-width="1"/><rect x="483.5" y="687.5" width="5" height="5" fill="#c40a18" stroke="#000" stroke-width="1"/><rect x="518.5" y="687.5" width="5" height="5" fill="#c40a18" stroke="#000" stroke-width="1"/><rect x="554.5" y="687.5" width="5" height="5" fill="#c40a18" stroke="#000" stroke-width="1"/><rect x="589.5" y="687.5" width="5" height="5" fill="#c40a18" stroke="#000" stroke-width="1"/><rect x="625.5" y="687.5" width="5" height="5" fill="#c40a18" stroke="#000" stroke-width="1"/><rect x="661.5" y="687.5" width="5" height="5" fill="#c40a18" stroke="#000" stroke-width="1"/><rect x="696.5" y="684.5" width="5" height="5" fill="#c40a18" stroke="#000" stroke-width="1"/><rect x="732.5" y="685.5" width="5" height="5" fill="#c40a18" stroke="#000" stroke-width="1"/><rect x="768.5" y="685.5" width="5" height="5" fill="#c40a18" stroke="#000" stroke-width="1"/><rect x="803.5" y="685.5" width="5" height="5" fill="#c40a18" stroke="#000" stroke-width="1"/><rect x="839.5" y="685.5" width="5" height="5" fill="#c40a18" stroke="#000" stroke-width="1"/><rect x="875.5" y="685.5" width="5" height="5" fill="#c40a18" stroke="#000" stroke-width="1"/><rect x="910.5" y="685.5" width="5" height="5" fill="#c40a18" stroke="#000" stroke-width="1"/><rect x="946.5" y="685.5" width="5" height="5" fill="#c40a18" stroke="#000" stroke-width="1"/><rect x="981.5" y="685.5" width="5" height="5" fill="#c40a18" stroke="#000" stroke-width="1"/><rect x="1017.5" y="685.5" width="5" height="5" fill="#c40a18" stroke="#000" stroke-width="1"/><rect x="1053.5" y="685.5" width="5" height="5" fill="#c40a18" stroke="#000" stroke-width="1"/><rect x="1088.5" y="685.5" width="5" height="5" fill="#c40a18" stroke="#000" stroke-width="1"/><path d="M747 744.5H760.5" stroke="#d2ae10" stroke-width="2"/><rect x="751.5" y="742" width="5" height="5" fill="#e7c41c" stroke="#000" stroke-width="1"/><text x="763.5" y="749">Data collected</text><path d="M849 744.5H862.5" stroke="#1b6a8c" stroke-width="2"/><rect x="853.5" y="742" width="5" height="5" fill="#1d6f96" stroke="#000" stroke-width="1"/><text x="865.5" y="749">Data unsent</text><path d="M951.5 744.5H965.0" stroke="#0f9a12" stroke-width="2"/><rect x="956.0" y="742" width="5" height="5" fill="#12a114" stroke="#000" stroke-width="1"/><text x="967.5" y="749">Data uploaded</text><path d="M1053 744.5H1066.5" stroke="#b8040f" stroke-width="2"/><rect x="1057.5" y="742" width="5" height="5" fill="#c40a18" stroke="#000" stroke-width="1"/><text x="1069" y="749">Upload errors</text></svg></div>

<!-- dropdown menu -->
<div class="abs" id="dd">
  <div class="hl"></div>
  <div class="it" style="top:6px">L<u>i</u>cense management</div>
  <div class="sep" style="top:24px"></div>
  <div class="it" style="top:29px"><u>S</u>etup Global Config</div>
  <div class="it" style="top:51px;letter-spacing:0.27px">S<u>e</u>tup Group Def</div>
  <div class="it" style="top:73px;letter-spacing:0.28px">Se<u>t</u>up Task Group</div>
  <div class="it" style="top:95px;letter-spacing:0.25px"><u>A</u>pp Log Level</div>
  <div class="sep" style="top:113px"></div>
  <div class="it" style="top:118px;letter-spacing:0.12px">Setup <u>M</u>etric</div><div class="ar" style="top:121px"></div>
  <div class="it" style="top:140px;letter-spacing:-0.12px">Met<u>r</u>ic filters</div><div class="ar" style="top:143px"></div>
  <div class="sep" style="top:158px"></div>
  <div class="it" style="top:163px;letter-spacing:0.06px">Set<u>u</u>p Uploader</div>
  <div class="it" style="top:185px;letter-spacing:0.06px">Setup Up<u>l</u>oader Cfg</div>
  <div class="it" style="top:207px;letter-spacing:0.08px">S<u>p</u>lunk Setup</div><div class="ar" style="top:210px"></div>
  <div class="sep" style="top:225px"></div>
  <div class="it" style="top:230px"><u>C</u>heck Errors</div>
</div>
</body>
</html>
